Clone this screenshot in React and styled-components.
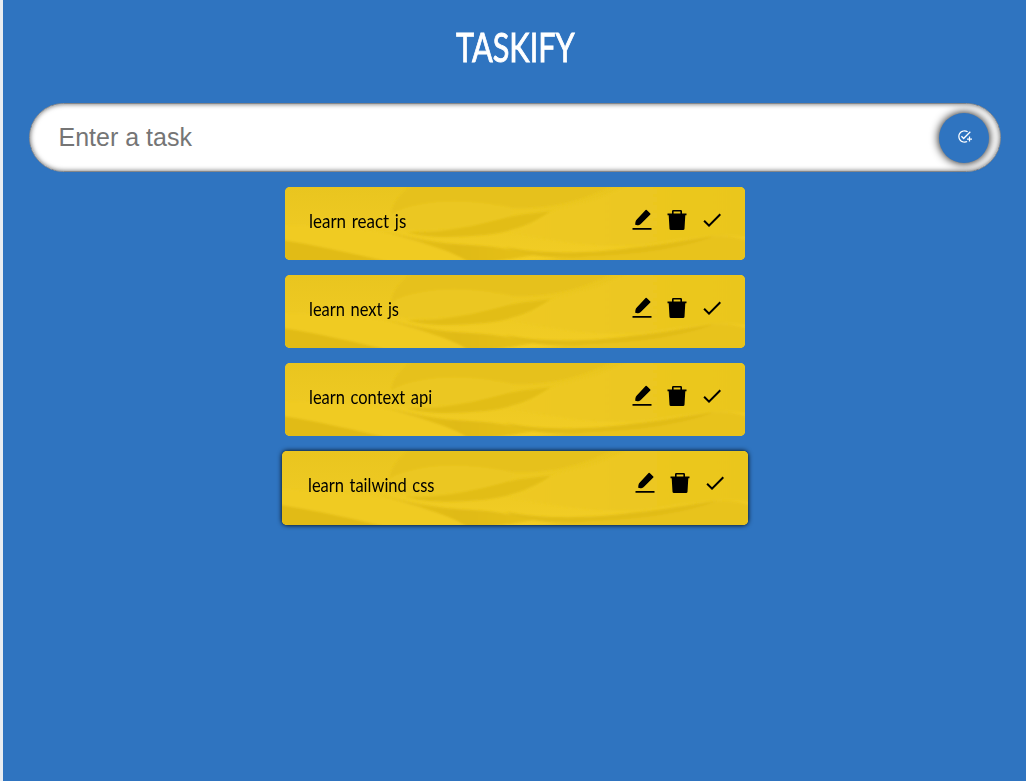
import React from 'react';
import styled, { createGlobalStyle, css } from 'styled-components';
import { MdAddTask, MdDone } from 'react-icons/md';

const GlobalStyle = createGlobalStyle`
  * { box-sizing: border-box; }
  body { margin: 0; background: #2f74c0; }
`;

const Page = styled.main`
  min-height: 781px;
  display: flex;
  flex-direction: column;
  align-items: center;
  background: #2f74c0;
  border-left: 3px solid #e9edf2;
  font-family: Lato, 'Open Sans', sans-serif;
`;

const Title = styled.h1`
  margin: 20px 0 0 2px;
  height: 53px;
  line-height: 53px;
  font-size: 41px;
  font-weight: 400;
  color: #fff;
  -webkit-text-stroke: 0.9px #fff;
  transform: scaleX(${(p) => p.$stretch});
`;

const Form = styled.form`
  display: flex;
  align-items: center;
  width: calc(100% - 51px);
  height: 69px;
  margin: 30px 0 15px;
  padding: 0 11px 0 29px;
  border-radius: 35px;
  background: #fff;
  border: 1px solid #85878a;
  box-shadow: inset 0 0 5px rgba(0, 0, 0, 0.6);
`;

const Input = styled.input`
  flex: 1;
  min-width: 0;
  padding: 0;
  border: 0;
  outline: 0;
  background: transparent;
  font: 25px 'Liberation Sans', Arial, sans-serif;
  &::placeholder { color: #757575; }
`;

const AddButton = styled.button`
  display: grid;
  place-items: center;
  width: 50px;
  height: 50px;
  padding: 0 0 2px 2px;
  border: 0;
  border-radius: 50%;
  background: #2f74c0;
  color: #fff;
  font-size: 15px;
  box-shadow: 0 0 10px #000;
`;

const List = styled.ul`
  display: flex;
  flex-direction: column;
  align-items: center;
  gap: 15px;
  margin: 0;
  padding: 0;
  list-style: none;
`;

const Card = styled.li`
  display: grid;
  width: 460px;
  height: 73px;
  border-radius: 5px;
  overflow: hidden;
  background: #ecc71f;
  ${(p) => p.$raised && css`
    width: 466px;
    height: 74px;
    margin-top: -0.5px;
    box-shadow: 0 0 5px #000;
  `}
  > * { grid-area: 1 / 1; }
`;

const Paper = styled.svg`
  width: 100%;
  height: 100%;
`;

const CardBody = styled.div`
  z-index: 1;
  display: flex;
  align-items: flex-start;
  justify-content: space-between;
  padding: 20px 20.5px 0 ${(p) => (p.$raised ? 26 : 24)}px;
`;

const Label = styled.span`
  font-size: 20px;
  line-height: 26px;
  word-spacing: 1.5px;
  color: #000;
  white-space: nowrap;
  transform-origin: left;
  transform: scaleX(${(p) => p.$stretch});
`;

const Actions = styled.div`
  display: flex;
  gap: 11px;
  padding-top: 0.5px;
  color: #000;
  svg { width: 24px; height: 24px; display: block; }
`;

const PaperTexture = () => (
  <Paper viewBox="0 0 460 73" preserveAspectRatio="none" aria-hidden="true">
    <defs>
      <linearGradient id="sheet" x1="0" y1="0" x2="0" y2="1">
        <stop offset="0" stopColor="#e9c51f" />
        <stop offset="1" stopColor="#f2cd25" />
      </linearGradient>
      <linearGradient id="crease" x1="0" y1="0" x2="1" y2="0">
        <stop offset="0" stopColor="#e9c41e" />
        <stop offset="0.5" stopColor="#e0ba16" />
        <stop offset="1" stopColor="#e5c01a" />
      </linearGradient>
      <linearGradient id="fold" x1="0" y1="0" x2="1" y2="0">
        <stop offset="0" stopColor="#eec921" />
        <stop offset="1" stopColor="#eac61f" />
      </linearGradient>
      <filter id="soft"><feGaussianBlur stdDeviation="0.9" /></filter>
    </defs>
    <rect width="460" height="73" fill="url(#sheet)" />
    <g filter="url(#soft)">
      <path d="M106 27C108 12 120 4 128 -3H330C300 12 270 22 230 21C185 12 145 13 106 27Z" fill="#e6c11b" />
      <path d="M112 24C140 13 175 12 212 18C236 20 232 31 205 36C165 43 130 47 106 40C100 33 104 28 112 24Z" fill="#ebc720" />
      <path d="M122 45C160 46 190 39 220 31C240 26 256 26 266 24C250 35 232 44 200 48C165 51 140 51 122 45Z" fill="#e2bd18" />
      <path d="M270 23C300 17 325 7 345 -3H463V50C430 46 400 52 360 58C310 62 260 52 225 46C246 39 255 30 270 23Z" fill="url(#fold)" />
      <path d="M-3 38C40 39 80 42 110 48C150 58 180 66 200 76H110C70 68 35 60 -3 53Z" fill="#f0cb24" />
      <path d="M-3 53C35 59 70 67 108 76H-3Z" fill="#e1bb17" />
      <path d="M94 43C125 50 152 57 185 58C208 59 230 63 250 68C225 72 205 76 185 76C165 62 135 56 94 43Z" fill="url(#crease)" />
      <path d="M230 76C290 68 360 68 400 55C430 47 445 48 463 54V76Z" fill="#e8c31d" />
      <path d="M220 60C260 68 310 66 345 61C378 58 405 52 430 49C400 61 350 68 305 69C270 73 240 69 220 60Z" fill="#e1bc18" />
    </g>
  </Paper>
);

const EditIcon = () => (
  <svg viewBox="0 0 24 24" fill="currentColor">
    <path d="M15.600 1.900a.8.8 0 0 1 1.100 0l3.600 3.600a.8.8 0 0 1 0 1.100L11 15.800c-1.600 1.600-3.600 1.600-5.600 1.300-.4-2.100.1-4.200 1.400-5.500zM2.500 20.100h19v1.700h-19z" />
  </svg>
);

const TrashIcon = () => (
  <svg viewBox="0 0 24 24" fill="currentColor">
    <path fillRule="evenodd" d="M7 5.600V3.300A1.300 1.300 0 0 1 8.300 2h7.400A1.300 1.300 0 0 1 17 3.300V5.600h4.500v1.600h-1.200L19.500 20.700a1.400 1.400 0 0 1-1.400 1.300H5.900A1.400 1.400 0 0 1 4.500 20.700L3.700 7.200H2.500V5.600zm1.600 0h6.800V3.500H8.600z" />
  </svg>
);

const tasks = [
  { text: 'learn react js', stretch: 0.85 },
  { text: 'learn next js', stretch: 0.825 },
  { text: 'learn context api', stretch: 0.825 },
  { text: 'learn tailwind css', stretch: 0.825, raised: true },
];

const Task = ({ text, stretch, raised }) => (
  <Card $raised={raised}>
    <PaperTexture />
    <CardBody $raised={raised}>
      <Label $stretch={stretch}>{text}</Label>
      <Actions>
        <EditIcon />
        <TrashIcon />
        <MdDone />
      </Actions>
    </CardBody>
  </Card>
);

export default function App() {
  return (
    <>
      <GlobalStyle />
      <Page>
        <Title $stretch={0.748}>TASKIFY</Title>
        <Form onSubmit={(e) => e.preventDefault()}>
          <Input placeholder="Enter a task" />
          <AddButton aria-label="Add task"><MdAddTask /></AddButton>
        </Form>
        <List>
          {tasks.map((t) => <Task key={t.text} {...t} />)}
        </List>
      </Page>
    </>
  );
}
